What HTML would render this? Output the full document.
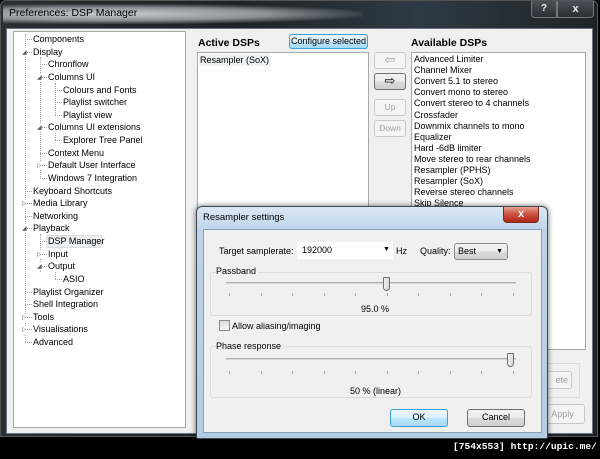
<!DOCTYPE html>
<html><head><style>
*{margin:0;padding:0;box-sizing:border-box}
body{width:600px;height:459px;background:#000;position:relative;overflow:hidden;font-family:"Liberation Sans",sans-serif;font-size:9px;color:#000}
.a{position:absolute;white-space:nowrap}
.t{position:absolute;white-space:nowrap;line-height:12px}
.btn{position:absolute;border:1px solid #707070;border-radius:3px;background:linear-gradient(#f2f2f2,#ebebeb 50%,#dcdcdc 50%,#cfcfcf);text-align:center;line-height:15px}
.dis{color:#a0a0a0;border-color:#c8c8c8;background:#f4f4f4}
.vl{position:absolute;border-left:1px dotted #a0a0a0}
.hl{position:absolute;border-top:1px dotted #a0a0a0;width:7px}
.tri{position:absolute;font-size:6px;color:#555;line-height:8px}
</style></head><body>
<div class="a" style="left:0;top:0;width:598px;height:437px;background:linear-gradient(90deg,#2a2e33,#1f2327 40%,#2e3a44 70%,#1f2327);border-radius:6px 6px 0 0;border:1px solid #555"></div>
<div class="a" style="left:3px;top:4px;width:360px;height:20px;background:radial-gradient(ellipse at 30% 50%,#c8ccd0 0%,#8a9096 45%,rgba(0,0,0,0) 75%)"></div>
<div class="a" style="left:9px;top:7px;font-size:10.5px;color:#000">Preferences: DSP Manager</div>
<div class="a" style="left:531px;top:1px;width:26px;height:17px;border:1px solid #777;border-top:none;border-radius:0 0 0 4px;background:linear-gradient(#4a5058,#2a2f35);color:#eee;font-weight:bold;text-align:center;line-height:16px;font-size:10px">?</div>
<div class="a" style="left:557px;top:1px;width:37px;height:17px;border:1px solid #777;border-top:none;border-radius:0 0 4px 0;background:linear-gradient(#4a5058,#2a2f35);color:#eee;font-weight:bold;text-align:center;line-height:16px;font-size:11px">x</div>
<div class="a" style="left:6px;top:28px;width:587px;height:406px;background:#f0f0f0;border:1px solid #6a7480"></div>
<div class="a" style="left:13px;top:31px;width:173px;height:397px;background:#fff;border:1px solid #a8a8a8"></div>
<div class="vl" style="left:25px;top:34px;height:308px"></div>
<div class="vl" style="left:40px;top:57px;height:120px"></div>
<div class="vl" style="left:55px;top:83px;height:32px"></div>
<div class="vl" style="left:55px;top:133px;height:7px"></div>
<div class="vl" style="left:40px;top:234px;height:38px"></div>
<div class="vl" style="left:55px;top:272px;height:7px"></div>
<div id="tree"></div>
<div class="a" style="left:198px;top:37px;font-weight:bold;font-size:10.5px">Active DSPs</div>
<div class="btn" style="left:289px;top:34px;width:79px;height:15px;border-color:#3c9fd8;background:linear-gradient(#eaf6fd,#d9f0fc 50%,#bee6fd 50%,#a7d9f5);line-height:13px">Configure selected</div>
<div class="a" style="left:197px;top:52px;width:172px;height:380px;background:#fff;border:1px solid #a8a8a8"></div>
<div class="a" style="left:199px;top:54px;width:72px;height:12px;background:#eef0f2"></div>
<div class="t" style="left:200px;top:54px">Resampler (SoX)</div>
<div class="btn dis" style="left:374px;top:52px;width:32px;height:17px;font-size:13px;line-height:14px">⇦</div>
<div class="btn" style="left:374px;top:73px;width:32px;height:17px;font-size:13px;line-height:14px">⇨</div>
<div class="btn dis" style="left:374px;top:99px;width:32px;height:17px;font-size:8.5px">Up</div>
<div class="btn dis" style="left:374px;top:120px;width:32px;height:17px;font-size:8.5px">Down</div>
<div class="a" style="left:411px;top:37px;font-weight:bold;font-size:10.5px">Available DSPs</div>
<div class="a" style="left:411px;top:52px;width:175px;height:298px;background:#fff;border:1px solid #a8a8a8"></div>
<div id="avail"></div>
<div class="a" style="left:532px;top:363px;width:48px;height:35px;border:1px solid #dcdcdc"></div>
<div class="btn dis" style="left:540px;top:371px;width:32px;height:18px;line-height:16px;text-align:right;padding-right:3px">ete</div>
<div class="btn dis" style="left:540px;top:404px;width:45px;height:20px;line-height:18px">Apply</div>
<div class="a" style="left:196px;top:206px;width:352px;height:233px;border:1px solid #404850;border-radius:6px 6px 2px 2px;background:linear-gradient(#dbe8f5,#bcd3ea 25px,#b3cbe4);box-shadow:0 0 6px rgba(0,0,0,.6)"></div>
<div class="a" style="left:203px;top:212px;font-size:9.5px">Resampler settings</div>
<div class="a" style="left:503px;top:207px;width:36px;height:16px;border:1px solid #7a2a20;border-top:none;border-radius:0 0 4px 4px;background:linear-gradient(#e8a090,#c85040 50%,#b02818);color:#fff;font-weight:bold;text-align:center;line-height:14px;font-size:11px">x</div>
<div class="a" style="left:203px;top:229px;width:339px;height:204px;background:#f0f0f0;border:1px solid #8aa0b8"></div>
<div class="a" style="left:219px;top:246px">Target samplerate:</div>
<div class="a" style="left:297px;top:242px;width:96px;height:17px;background:#fff"></div>
<div class="a" style="left:302px;top:245px">192000</div>
<div class="a" style="left:383px;top:246px;font-size:7px">▼</div>
<div class="a" style="left:396px;top:246px">Hz</div>
<div class="a" style="left:420px;top:246px">Quality:</div>
<div class="btn" style="left:454px;top:243px;width:54px;height:17px;text-align:left;padding-left:3px;border-color:#8a8a8a">Best<span style="position:absolute;right:4px;top:0;font-size:7px">▼</span></div>
<div class="a" style="left:210px;top:272px;width:322px;height:44px;border:1px solid #dcdcdc;border-radius:3px"></div>
<div class="a" style="left:216px;top:266px;background:#f0f0f0;padding-right:2px">Passband</div>
<div class="a" style="left:226px;top:282px;width:290px;height:2px;background:#d6d6d6;border-top:1px solid #b0b0b0"></div>
<div class="a" style="left:383px;top:277px;width:7px;height:14px;border:1px solid #707070;border-radius:1px 1px 4px 4px;background:linear-gradient(90deg,#f0f0f0,#d8d8d8)"></div>
<div class="a" style="left:361px;top:304px">95.0 %</div>
<div class="a" style="left:219px;top:320px;width:11px;height:11px;border:1px solid #8a8a8a;background:linear-gradient(#ddd,#f8f8f8)"></div>
<div class="a" style="left:232px;top:321px">Allow aliasing/imaging</div>
<div class="a" style="left:210px;top:346px;width:322px;height:52px;border:1px solid #dcdcdc;border-radius:3px"></div>
<div class="a" style="left:216px;top:341px;background:#f0f0f0;padding-right:2px">Phase response</div>
<div class="a" style="left:226px;top:358px;width:290px;height:2px;background:#d6d6d6;border-top:1px solid #b0b0b0"></div>
<div class="a" style="left:507px;top:353px;width:7px;height:14px;border:1px solid #707070;border-radius:1px 1px 4px 4px;background:linear-gradient(90deg,#f0f0f0,#d8d8d8)"></div>
<div class="a" style="left:350px;top:386px">50 % (linear)</div>
<div class="btn" style="left:390px;top:409px;width:58px;height:18px;border-color:#3c9fd8;background:linear-gradient(#eaf6fd,#d9f0fc 50%,#bee6fd 50%,#a7d9f5)">OK</div>
<div class="btn" style="left:467px;top:409px;width:58px;height:18px">Cancel</div>
<div id="ticks"></div>
<div class="a" style="left:453px;top:441px;color:#fff;font-family:'Liberation Mono',monospace;font-size:9.6px;font-weight:bold">[754x553] http://upic.me/</div>
<script>
var items=[[0,'Components'],[0,'Display','o'],[1,'Chronflow'],[1,'Columns UI','o'],[2,'Colours and Fonts'],[2,'Playlist switcher'],[2,'Playlist view'],[1,'Columns UI extensions','o'],[2,'Explorer Tree Panel'],[1,'Context Menu'],[1,'Default User Interface','c'],[1,'Windows 7 Integration'],[0,'Keyboard Shortcuts'],[0,'Media Library','c'],[0,'Networking'],[0,'Playback','o'],[1,'DSP Manager'],[1,'Input','c'],[1,'Output','o'],[2,'ASIO'],[0,'Playlist Organizer'],[0,'Shell Integration'],[0,'Tools','c'],[0,'Visualisations','c'],[0,'Advanced']];
var h='';items.forEach(function(it,i){var y=33+i*12.63,x=33+it[0]*15;
h+='<div class="hl" style="left:'+(x-8)+'px;top:'+(y+6)+'px"></div>';
if(it[2])h+='<div class="tri" style="left:'+(x-11)+'px;top:'+(y+3)+'px;background:#fff">'+(it[2]=='o'?'◢':'▷')+'</div>';
if(it[1]=='DSP Manager')h+='<div class="a" style="left:'+(x-2)+'px;top:'+y+'px;width:56px;height:13px;background:#eceef0;border:1px solid #dadde0;border-radius:2px"></div>';
h+='<div class="t" style="left:'+x+'px;top:'+y+'px">'+it[1]+'</div>';});
document.getElementById('tree').innerHTML=h;
var av=['Advanced Limiter','Channel Mixer','Convert 5.1 to stereo','Convert mono to stereo','Convert stereo to 4 channels','Crossfader','Downmix channels to mono','Equalizer','Hard -6dB limiter','Move stereo to rear channels','Resampler (PPHS)','Resampler (SoX)','Reverse stereo channels','Skip Silence'];
h='';av.forEach(function(s,i){h+='<div class="t" style="left:414px;top:'+(53+i*11.1)+'px">'+s+'</div>';});
document.getElementById('avail').innerHTML=h;
h='';for(var k=0;k<10;k++){var x=229+k*31.5;h+='<div class="a" style="left:'+x+'px;top:293px;width:1px;height:3px;background:#aaa"></div><div class="a" style="left:'+x+'px;top:371px;width:1px;height:3px;background:#aaa"></div>';}
document.getElementById('ticks').innerHTML=h;
</script>
</body></html>
